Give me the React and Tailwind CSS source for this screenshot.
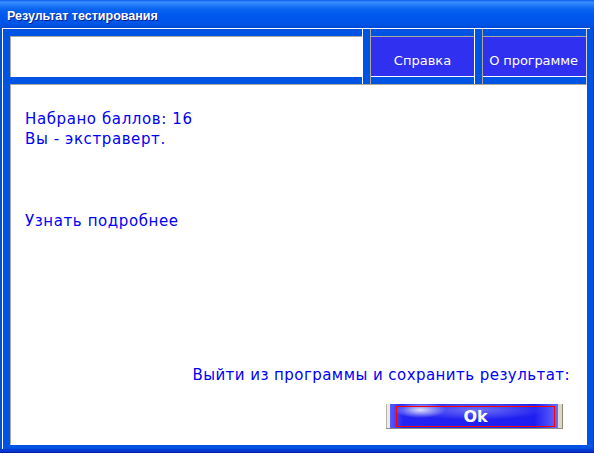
export default function App() {
  return (
    <div className="w-[594px] h-[453px] flex flex-col bg-[#0054E3] overflow-hidden font-['DejaVu_Sans',sans-serif]">
      {/* title bar */}
      <div className="h-[28px] shrink-0 flex items-center pl-[7px] pt-[4px] bg-[linear-gradient(180deg,#0A5BE8_0px,#3B8FFD_2px,#2B82FB_4px,#0A65F0_9px,#0058EE_15px,#0055E8_24px,#0049D6_28px)]">
        <span className="text-white font-bold text-[12.5px] font-['Liberation_Sans',sans-serif] [text-shadow:1px_1px_0_#0A1F8C]">
          Результат тестирования
        </span>
      </div>

      {/* frame + client */}
      <div className="flex-1 flex min-h-0">
        <div className="w-[2px] bg-[#0050DC]" />
        <div className="flex-1 flex flex-col border-l border-t border-white bg-[#0054E3] pr-[3px] pb-[4px]">
          {/* top row */}
          <div className="h-[55px] flex shrink-0">
            <div className="w-[360px] flex flex-col pl-[7px] pt-[7px] border-r border-white">
              <div className="h-[41px] bg-white border-t border-l border-[#ACA899]" />
            </div>
            <div className="w-[112px] pl-[7px] border-r border-white flex">
              <div className="flex-1 border-l border-[#ACA899] pt-[7px]">
                <div className="h-[41px] border-t border-[#ACA899] border-b border-b-white bg-[#3030F0] flex items-center justify-center pt-[8px] text-white text-[13px]">
                  Справка
                </div>
              </div>
            </div>
            <div className="w-[112px] pl-[7px] border-r border-[#D4D2CC] flex">
              <div className="flex-1 border-l border-[#ACA899] pt-[7px]">
                <div className="h-[41px] border-t border-[#ACA899] border-b border-b-white bg-[#3030F0] flex items-center justify-center pt-[8px] pr-[2px] text-white text-[13px] tracking-[-0.1px]">
                  О программе
                </div>
              </div>
            </div>
          </div>

          {/* main panel */}
          <div className="ml-[7px] h-[361px] shrink-0 flex flex-col bg-white border-t border-l border-[#ACA899] border-r border-r-white border-b border-b-white text-[#0000F5] text-[15px] leading-[20px] tracking-[0.6px]">
            <div className="pl-[14px] pt-[24px]">
              <div>Набрано баллов: 16</div>
              <div>Вы - экстраверт.</div>
              <div className="mt-[62px]">Узнать подробнее</div>
            </div>
            <div className="flex-1" />
            <div className="flex flex-col items-end pr-[16px] tracking-[0.45px]">
              <div>Выйти из программы и сохранить результат:</div>
            </div>
            <div className="flex justify-end mr-[23px] mt-[19px] mb-[15px]">
              <div className="w-[177px] h-[25px] flex border-b border-[#8F8C80]">
                <div className="w-[4px] bg-[#EEEDE5] border-l border-[#B8B4A2]" />
                <div className="flex-1 flex pl-[6px] pr-[3px] pt-[2px] pb-[1px] bg-[radial-gradient(ellipse_26px_8px_at_30px_6px,rgba(255,255,255,0.85),rgba(255,255,255,0)),radial-gradient(ellipse_70px_10px_at_86px_6px,rgba(190,190,255,0.5),rgba(190,190,255,0)),linear-gradient(90deg,#5A5AFF_0%,#2323F2_8%,#1E1EF0_86%,#6A6AFF_100%)]">
                  <div className="flex-1 border border-[#FF0000] flex items-center justify-center">
                    <span className="text-white font-bold text-[16px] leading-[16px] tracking-normal">Ok</span>
                  </div>
                </div>
                <div className="w-[5px] bg-[#DCD8C8] border-r border-[#8C8878]" />
              </div>
            </div>
          </div>
        </div>
        <div className="w-[4px] bg-[#0054E3] border-r border-[#0838C8]" />
      </div>

      {/* bottom frame */}
      <div className="h-[4px] shrink-0 bg-[#0838D2] border-b border-[#001B9A]" />
    </div>
  );
}
